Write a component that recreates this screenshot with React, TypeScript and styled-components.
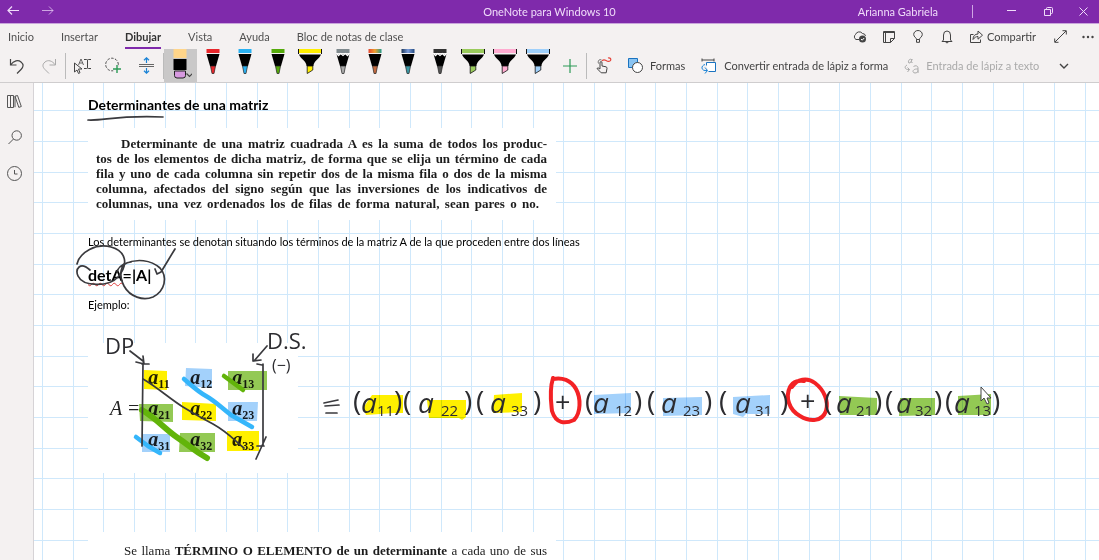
import React from "react";
import styled, { createGlobalStyle } from "styled-components";

const ui = `Lato, "Open Sans", sans-serif`;
const doc = `Lato, "Open Sans", sans-serif`;
const serif = `"Liberation Serif", serif`;

const GlobalStyle = createGlobalStyle`
  * { box-sizing: border-box; }
  body { margin: 0; background: #f4f1f1; }
`;

const Shell = styled.div`
  display: flex;
  flex-direction: column;
  height: 100vh;
  overflow: hidden;
  font-family: ${ui};
  font-size: 11px;
  color: #444;
`;

const TitleBar = styled.header`
  display: grid;
  grid-template-columns: 1fr auto 1fr;
  align-items: center;
  flex: none;
  height: 24px;
  background: #7f2aab;
  border-bottom: 1px solid #c9a5dc;
  color: #f0dcfa;
`;

const Side = styled.div<{ $end?: boolean }>`
  display: flex;
  align-items: center;
  justify-content: ${(p) => (p.$end ? "flex-end" : "flex-start")};
`;

const AppTitle = styled.h1`
  margin: 0;
  font-size: 11px;
  font-weight: 400;
`;

const IconButton = styled.button<{ $w: number }>`
  display: flex;
  align-items: center;
  justify-content: center;
  flex: none;
  width: ${(p) => p.$w}px;
  height: 100%;
  padding: 0;
  border: 0;
  background: none;
  color: inherit;
`;

const UserName = styled.span`
  margin-right: 34px;
`;

const TitleRule = styled.span`
  width: 1px;
  height: 13px;
  margin-right: 20px;
  background: #cfa5e4;
`;

const TabBar = styled.div`
  display: flex;
  justify-content: space-between;
  flex: none;
  height: 25px;
`;

const Tabs = styled.nav`
  display: flex;
  gap: 27px;
  padding-left: 8px;
`;

const Tab = styled.button<{ $active?: boolean }>`
  padding: 2px 0 0;
  border: 0;
  border-bottom: 2px solid ${(p) => (p.$active ? "#7f2aab" : "transparent")};
  background: none;
  color: ${(p) => (p.$active ? "#333" : "#505050")};
  font-family: inherit;
  font-size: 11px;
  font-weight: ${(p) => (p.$active ? 700 : 400)};
  line-height: 20px;
  white-space: nowrap;
`;

const TabTools = styled.div`
  display: flex;
  align-items: center;
`;

const TextButton = styled.button<{ $gap: number; $muted?: boolean }>`
  display: flex;
  align-items: center;
  flex: none;
  gap: ${(p) => p.$gap}px;
  height: 100%;
  padding: 0 8px;
  border: 0;
  background: none;
  color: ${(p) => (p.$muted ? "#aaa" : "#444")};
  font-family: inherit;
  font-size: 11px;
  white-space: nowrap;
`;

const ToolBar = styled.div`
  display: flex;
  align-items: center;
  flex: none;
  height: 34px;
  border-bottom: 1px solid #cfcdce;
`;

const Rule = styled.span`
  flex: none;
  width: 1px;
  height: 26px;
  background: #bbb;
`;

const Pens = styled.div`
  display: grid;
  grid-template-columns: repeat(12, 1fr);
  flex: none;
  width: 390px;
  height: 100%;
`;

const PenButton = styled.button<{ $selected?: boolean }>`
  display: flex;
  justify-content: center;
  padding: 0;
  border: 0;
  background: ${(p) => (p.$selected ? "#c9c8c8" : "none")};
`;

const Body = styled.div`
  display: flex;
  flex: 1;
  min-height: 0;
`;

const Rail = styled.aside`
  display: flex;
  flex-direction: column;
  align-items: flex-start;
  flex: none;
  width: 34px;
  border-right: 1px solid #d6d3d6;
`;

const RailButton = styled.button`
  display: flex;
  align-items: center;
  justify-content: center;
  width: 29px;
  height: 36px;
  padding: 0;
  border: 0;
  background: none;
  color: #555;
`;

const Page = styled.main`
  position: relative;
  flex: 1;
  min-width: 0;
  overflow: hidden;
  padding: 12px 0 0 54px;
  background-color: #fff;
  background-image:
    linear-gradient(90deg, transparent 8px, #cfe8fb 8px, #cfe8fb 9px, transparent 9px, transparent 39px, #cfe8fb 39px, #cfe8fb 40px, transparent 40px, transparent 69px, #cfe8fb 69px, #cfe8fb 70px, transparent 70px),
    linear-gradient(transparent 27px, #cfe8fb 27px, #cfe8fb 28px, transparent 28px, transparent 58px, #cfe8fb 58px, #cfe8fb 59px, transparent 59px, transparent 89px, #cfe8fb 89px, #cfe8fb 90px, transparent 90px);
  background-size: 92px 92px;
  color: #000;
  font-family: ${doc};
`;

const Heading = styled.h2`
  margin: 0 0 13px;
  font-size: 14px;
  line-height: 20px;
  font-weight: 700;
`;

const Clip = styled.section`
  width: 468px;
  padding: 8px 9px 9px 8px;
  background: #fff;
  color: #1c1c1c;
  font-family: ${serif};
  font-size: 13px;
  line-height: 15px;
`;

const ClipLine = styled.span<{ $indent?: boolean; $short?: boolean }>`
  display: block;
  padding-left: ${(p) => (p.$indent ? 25 : 0)}px;
  padding-right: ${(p) => (p.$short ? 8 : 0)}px;
  font-weight: 700;
  text-align: justify;
  text-align-last: justify;
  white-space: nowrap;
`;

const Note = styled.p<{ $top: number }>`
  margin: ${(p) => p.$top}px 0 0;
  font-size: 11px;
  line-height: 20px;
`;

const Formula = styled.p`
  margin: 13px 0 0;
  font-size: 16px;
  font-weight: 700;
  line-height: 20px;
`;

const Misspelt = styled.span`
  text-decoration: underline wavy #e04040 1px;
`;

const MatrixClip = styled.section`
  display: flex;
  align-items: center;
  gap: 8px;
  width: 210px;
  height: 130px;
  margin: 28px 0 59px;
  padding: 0 0 0 22px;
  background: #fff;
  color: #222;
  font-family: ${serif};
  font-size: 20px;
  font-style: italic;
`;

const MatrixTable = styled.table`
  border-collapse: collapse;
  td {
    width: 42px;
    height: 31px;
    padding: 0;
    line-height: 24px;
    font-weight: 700;
  }
  sub {
    font-size: 12px;
    font-style: normal;
    line-height: 0;
    vertical-align: -4px;
  }
`;

const LowerClip = styled(Clip)`
  padding: 11px 9px 9px 36px;
  height: 60px;
  white-space: nowrap;
  text-align-last: justify;
`;

const InkLayer = styled.svg<{ $blend?: boolean }>`
  position: absolute;
  left: 0;
  top: 0;
  width: 1065px;
  height: 477px;
  pointer-events: none;
  mix-blend-mode: ${(p) => (p.$blend ? "multiply" : "normal")};
  font-family: "Open Sans", sans-serif;
`;

const Svg = ({ w = 18, h = w, children }: { w?: number; h?: number; children: React.ReactNode }) => (
  <svg width={w} height={h} viewBox={`0 0 ${w} ${h}`} fill="none" stroke="currentColor" aria-hidden="true">
    {children}
  </svg>
);

type PenSpec = { name: string; kind: "pen" | "marker" | "pencil"; color: string; tip?: string };

const pens: PenSpec[] = [
  { name: "Lápiz rojo", kind: "pen", color: "#e8262b" },
  { name: "Lápiz azul", kind: "pen", color: "#29b1f2" },
  { name: "Lápiz verde", kind: "pen", color: "#55aa0b" },
  { name: "Marcador amarillo", kind: "marker", color: "#ffee00" },
  { name: "Lápiz gris", kind: "pencil", color: "#7f898d", tip: "#aaa" },
  { name: "Lápiz arcoíris", kind: "pen", color: "url(#rainbow)", tip: "#c2693f" },
  { name: "Lápiz galaxia", kind: "pen", color: "url(#galaxy)", tip: "#3a98a5" },
  { name: "Lápiz negro", kind: "pencil", color: "#333", tip: "#555" },
  { name: "Marcador verde", kind: "marker", color: "#9acb5c" },
  { name: "Marcador rosa", kind: "marker", color: "#ffabd0" },
  { name: "Marcador celeste", kind: "marker", color: "#9fd0fb" },
];

const Pen = ({ kind, color, tip }: PenSpec) => (
  <svg width="24" height="26" viewBox="0 0 24 26" aria-hidden="true">
    {kind === "marker" ? (
      <>
        <path d="M0.5 0h23v4h-23z" fill={color} />
        <path d="M0.5 0v5M23.5 0v5" stroke="#111" />
        <path d="M1 5.500h22C21.500 10 15.500 12 15.500 17h-7C8.500 12 2.500 10 1 5.500z" fill="#000" />
        <path d="M9.200 17h5.600v4l-5.600 3.500z" fill={tip ?? color} stroke="#111" strokeWidth=".8" />
      </>
    ) : (
      <>
        <path d="M5.500 0h13v4h-13z" fill={color} />
        <path d="M5.500 5h13L15 17H9z" fill="#000" />
        {kind === "pencil" && <path d="M5.500 4.500l2 2 2.200-2 2.300 2 2.300-2 2.200 2 2-2" fill="none" stroke="#fff" strokeWidth="1.300" />}
        <path d="M9.500 17h5l-1.500 7.500h-2z" fill={tip ?? color} stroke="#222" strokeWidth=".7" />
      </>
    )}
  </svg>
);

const YELLOW = "#fff000";
const BLUE = "#a3d1fb";
const GREEN = "#93c954";

const highlights: [string, string][] = [
  [YELLOW, "M144 370l23 1v19l-23-1z"],
  [BLUE, "M186 368l26 1v19l-27-2z"],
  [GREEN, "M228 371h39v19h-39z"],
  [GREEN, "M139 404h34v18l-33-1z"],
  [YELLOW, "M182 402l34 2v17l-34-1z"],
  [BLUE, "M228 402h30l-1 19h-29z"],
  [BLUE, "M142 434h28v18h-28z"],
  [GREEN, "M180 433h35v19h-36z"],
  [YELLOW, "M227 431h32v20h-32z"],
  [YELLOW, "M372 395h31v18h-9l-28 2-3-7z"],
  [YELLOW, "M427 400h39v17l-4 3-3-2h-30z"],
  [YELLOW, "M494 395l28-2v19l-29 1z"],
  [BLUE, "M594 395l37-2v20l-37 1z"],
  [BLUE, "M663 398l39-1v18l-39 1z"],
  [BLUE, "M733 397l37-2v19h-24l-3 3-10-3z"],
  [GREEN, "M839 396l38 2v17h-37z"],
  [GREEN, "M900 398h35v17l-36 1z"],
  [GREEN, "M958 396l33-2v21h-33z"],
];

/* open paren, letter, subscript and close paren of each written factor */
const factors: [number, number, string, number, number][] = [
  [353, 361, "11", 377, 394],
  [403, 418, "22", 441, 464],
  [476, 490, "33", 511, 533],
  [585, 593, "12", 615, 634],
  [647, 661, "23", 683, 704],
  [719, 735, "31", 755, 780],
  [824, 836, "21", 856, 874],
  [885, 896, "32", 915, 934],
  [945, 954, "13", 974, 992],
];

const matrix = [["11", "12", "13"], ["21", "22", "23"], ["31", "32", "33"]];

export default function App() {
  return (
    <Shell>
      <GlobalStyle />
      <svg width="0" height="0" style={{ position: "absolute" }} aria-hidden="true">
        <defs>
          <linearGradient id="rainbow"><stop stopColor="#e6452e" /><stop offset=".5" stopColor="#f0a030" /><stop offset="1" stopColor="#1e9a8a" /></linearGradient>
          <linearGradient id="galaxy"><stop stopColor="#1c3558" /><stop offset=".5" stopColor="#7e9edb" /><stop offset="1" stopColor="#234a80" /></linearGradient>
        </defs>
      </svg>

      <TitleBar>
        <Side>
          <IconButton $w={25} aria-label="Atrás"><Svg w={12}><path d="M12 4.500H1M5 .5L1 4.500l4 4" strokeWidth="1.200" /></Svg></IconButton>
          <IconButton $w={46} aria-label="Adelante"><Svg w={12}><path d="M0 4.500h11M7 .5l4 4-4 4" opacity=".7" /></Svg></IconButton>
        </Side>
        <AppTitle>OneNote para Windows 10</AppTitle>
        <Side $end>
          <UserName>Arianna Gabriela</UserName>
          <TitleRule />
          <IconButton $w={37} aria-label="Minimizar"><Svg w={9}><path d="M0 3.500h9" /></Svg></IconButton>
          <IconButton $w={37} aria-label="Restaurar"><Svg w={9}><path d="M.5 2.500h6v6h-6zM2.500 2.500V1.500q0-1 1-1h4q1 0 1 1v4q0 1-1 1h-1" /></Svg></IconButton>
          <IconButton $w={32} aria-label="Cerrar"><Svg w={9}><path d="M.5.5l8 8M8.500.5l-8 8" /></Svg></IconButton>
        </Side>
      </TitleBar>

      <TabBar>
        <Tabs aria-label="Cinta">
          {["Inicio", "Insertar", "Dibujar", "Vista", "Ayuda", "Bloc de notas de clase"].map((t) => (
            <Tab key={t} $active={t === "Dibujar"}>{t}</Tab>
          ))}
        </Tabs>
        <TabTools>
          <IconButton $w={29} aria-label="Sincronizar">
            <Svg w={16} h={14}>
              <path d="M7 9.500H4a3 3 0 0 1-.5-5A4 4 0 0 1 10.500 3.500 3 3 0 0 1 13.500 6" />
              <circle cx="10.500" cy="9" r="3.500" fill="#444" stroke="none" /><path d="M9 9l1.200 1.200 2-2.200" stroke="#fff" />
            </Svg>
          </IconButton>
          <IconButton $w={29} aria-label="Notas"><Svg w={12}><path d="M.5.5h11v7l-4 4h-7zM7.500 11.500v-4h4M2.500.5v11M.5 1.500h11" /></Svg></IconButton>
          <IconButton $w={29} aria-label="Sugerencias"><Svg w={10} h={13}><path d="M3.500 9.500C3.500 7.500.7 7 .7 4.500a4.300 4 0 0 1 8.600 0C9.300 7 6.500 7.500 6.500 9.500zM3.500 9.500v2.800h3V9.500" /></Svg></IconButton>
          <IconButton $w={30} aria-label="Notificaciones"><Svg w={12} h={14}><path d="M2.500 10V5a3.500 4 0 0 1 7 0v5l1.500 1.500H1zM4.500 12q1.500 2 3 0" /></Svg></IconButton>
          <TextButton $gap={4}>
            <Svg w={13} h={13}><path d="M3.500 4.500h-3v8h10v-3M3 9.500C3 6 5 4 8 4V1l4.500 4.200L8 9.200V6.500C6 6.500 4.500 7.500 3 9.500z" /></Svg>
            Compartir
          </TextButton>
          <IconButton $w={33} aria-label="Pantalla completa"><Svg w={13}><path d="M1 12L12 1M8.500.7h3.800v3.800M.7 8.500v3.800h3.800" /></Svg></IconButton>
          <IconButton $w={22} aria-label="Más"><Svg w={12} h={4}><g fill="currentColor" stroke="none"><circle cx="1.500" cy="2" r="1.200" /><circle cx="6" cy="2" r="1.200" /><circle cx="10.500" cy="2" r="1.200" /></g></Svg></IconButton>
        </TabTools>
      </TabBar>

      <ToolBar>
        <IconButton $w={33} aria-label="Deshacer"><Svg w={16}><path d="M1.500 1v6h6M1.500 7C5 2.500 9 1.500 12 4c3 2.500 2.500 5 0 7.500l-4 4" strokeWidth="1.200" /></Svg></IconButton>
        <IconButton $w={32} aria-label="Rehacer"><Svg w={16}><path d="M14.500 1v6h-6M14.500 7C11 2.500 7 1.500 4 4c-3 2.500-2.500 5 0 7.500l4 4" stroke="#aaa" /></Svg></IconButton>
        <Rule />
        <IconButton $w={31} aria-label="Seleccionar objetos o escribir texto">
          <Svg w={18} h={16}>
            <path d="M1.500 5v9l2.500-2 1.500 3.500 1.500-.8L5.500 11H9z" />
            <path d="M5.500 7l2.500-6 2.500 6M6.500 5h3" strokeWidth=".8" /><path d="M11 1.500h2.500q1 0 1 1v7q0 1-1 1H11M18 1.500h-2.500q-1 0-1 1v7q0 1 1 1H18" />
          </Svg>
        </IconButton>
        <IconButton $w={33} aria-label="Selección de lazo">
          <Svg w={17} h={17}><circle cx="7" cy="7.500" r="6.300" strokeDasharray="2.500 1.500" /><path d="M12 8v8M8 12h8" stroke="#f4f1f1" strokeWidth="3.500" /><path d="M12 8v8M8 12h8" stroke="#2b9a56" strokeWidth="1.400" /></Svg>
        </IconButton>
        <IconButton $w={33} aria-label="Insertar espacio">
          <Svg w={15} h={17}><path d="M0 7.500h15M0 9.500h15" stroke="#666" /><path d="M7.500 6V1M5 3.200L7.500.8 10 3.200M7.500 11v5M5 13.800l2.500 2.400 2.500-2.400" stroke="#1a83d6" strokeWidth="1.200" /></Svg>
        </IconButton>
        <Rule />
        <Pens>
          <PenButton $selected aria-label="Borrador">
            <svg width="24" height="32" viewBox="0 0 24 32" aria-hidden="true">
              <path d="M5.500 0h13v9h-13z" fill="#ffd58a" />
              <path d="M5.500 10h13v11h-13z" fill="#000" />
              <path d="M6.500 22h11v4.500q0 2.500-2.500 2.500H9q-2.500 0-2.500-2.500z" fill="#d79ae0" stroke="#222" />
              <path d="M18.500 24.500l3 3 3-3" fill="none" stroke="#444" strokeWidth="1.200" />
            </svg>
          </PenButton>
          {pens.map((p) => <PenButton key={p.name} aria-label={p.name}><Pen {...p} /></PenButton>)}
        </Pens>
        <IconButton $w={32} aria-label="Agregar lápiz"><Svg w={14}><path d="M7 0v14M0 7h14" stroke="#2b9a56" strokeWidth="1.200" /></Svg></IconButton>
        <Rule />
        <IconButton $w={33} aria-label="Dibujar con el dedo">
          <Svg w={16} h={17}>
            <path d="M4 11.500V5.200q1-1.200 2 0V9l4 .8q1 .3 1 1.500l-.8 4.500h-5L1 11.500q.8-1.500 3 .5z" />
            <path d="M2.500 6.500C1.500 3.500 3.500 2 5.500 3" strokeWidth=".8" />
            <path d="M6 4C8 1.500 9.500 3.500 11.500 4.200S15.500 3.500 14.500 1.500q-1-1-2.500-.5" stroke="#e5443b" strokeWidth="1.200" />
          </Svg>
        </IconButton>
        <TextButton $gap={7}>
          <Svg w={15} h={15}><path d="M.5.5h9v9h-9z" fill="#8ac4f2" stroke="#1a73c0" /><circle cx="9.500" cy="9.500" r="5" fill="#fff" stroke="#444" /></Svg>
          Formas
        </TextButton>
        <TextButton $gap={7}>
          <Svg w={16} h={16}>
            <path d="M1 2h12M1 .5v3M13 .5v3" /><path d="M5.500 7.500v-3h9v9h-7" fill="#fff" stroke="#1a73c0" /><path d="M4 6.500C-1 8 .500 13.500 6 12.500M4 9.500l2.500 3L4 15.500" stroke="#1a83d6" />
          </Svg>
          Convertir entrada de lápiz a forma
        </TextButton>
        <TextButton $gap={6} $muted disabled>
          <Svg w={16} h={16}>
            <path d="M7.500 1.500C5 0 3.500 4.500 5 5s2.500-2 3-4c-1 3-.8 4 .5 3.500M3 7C0 8.500.5 12 5.500 11.500M3.500 9.500l2 2-2 2.500" />
            <path d="M9.500 8.500c2-1.500 4.500-.5 4.500 1.200V15M14 11c-6-.5-6 4-3 4 1.800 0 3-1.200 3-2.500" />
          </Svg>
          Entrada de lápiz a texto
        </TextButton>
        <IconButton $w={34} aria-label="Más opciones"><Svg w={10} h={6}><path d="M1 1l4 4 4-4" strokeWidth="1.400" /></Svg></IconButton>
      </ToolBar>

      <Body>
        <Rail>
          <RailButton aria-label="Blocs de notas"><Svg w={15} h={13}><path d="M.5.5h3v12h-3zM3.500.5h3v12h-3zM8 1.200l2.500-.7 3.800 11-2.500.9zM8 1.200v11" /></Svg></RailButton>
          <RailButton aria-label="Buscar"><Svg w={14} h={15}><circle cx="8.700" cy="5.500" r="4.700" /><path d="M5.500 9L.5 14" /></Svg></RailButton>
          <RailButton aria-label="Recientes"><Svg w={15} h={15}><circle cx="7.500" cy="7.500" r="7" /><path d="M7.500 4v4h3" /></Svg></RailButton>
        </Rail>

        <Page>
          <Heading>Determinantes de una matriz</Heading>
          <Clip>
            <ClipLine $indent>Determinante de una matriz cuadrada A es la suma de todos los produc-</ClipLine>
            <ClipLine>tos de los elementos de dicha matriz, de forma que se elija un término de cada</ClipLine>
            <ClipLine>fila y uno de cada columna sin repetir dos de la misma fila o dos de la misma</ClipLine>
            <ClipLine>columna, afectados del signo según que las inversiones de los indicativos de</ClipLine>
            <ClipLine $short>columnas, una vez ordenados los de filas de forma natural, sean pares o no.</ClipLine>
          </Clip>
          <Note $top={12}>Los determinantes se denotan situando los términos de la matriz A de la que proceden entre dos líneas</Note>
          <Formula><Misspelt>detA</Misspelt>=|A|</Formula>
          <Note $top={10}>Ejemplo:</Note>
          <MatrixClip>
            <span>A =</span>
            <MatrixTable>
              <tbody>
                {matrix.map((row) => (
                  <tr key={row[0]}>{row.map((c) => <td key={c}>a<sub>{c}</sub></td>)}</tr>
                ))}
              </tbody>
            </MatrixTable>
          </MatrixClip>
          <LowerClip>Se llama <b>TÉRMINO O ELEMENTO de un determinante</b> a cada uno de sus</LowerClip>

          <InkLayer $blend viewBox="34 83 1065 477" aria-hidden="true">
            {highlights.map(([c, d]) => <path key={d} d={d} fill={c} />)}
          </InkLayer>

          <InkLayer viewBox="34 83 1065 477">
            <g fill="none" strokeLinecap="round" strokeLinejoin="round">
              <g stroke="#35b6fb" strokeWidth="4.500">
                <path d="M184 379C190 384 197 391 206 396S222 408 231 415L252 427" />
                <path d="M136 437L148 446 160 453" />
              </g>
              <g stroke="#62b40a" strokeWidth="4.500">
                <path d="M224 376L243 390" />
                <path d="M142 410C157 419 166 430 178 438S193 450 207 458" strokeWidth="6" />
              </g>
              <g stroke="#3a3a3e" strokeWidth="1.700">
                <path d="M88 120C104 121 116 115 163 117" />
                <path d="M90 270C80 261 75 269 78 276C83 287 109 287 118 277C129 264 126 251 111 247C96 243 80 252 77 264" />
                <path d="M131 262C119 263 119 276 124 286C130 297 143 301 153 297C165 291 168 277 160 268C151 260 137 258 124 264C120 266 118 269 117 271" />
                <path d="M155 269L157 274 161 272C166 264 170 257 175 249" />
                <path d="M130 351L143 361M136 362l8 2-1-8M143 363l-1 83M142 364h7" />
                <path d="M267 346L254 361M253 354v7l8-1M263 364v82M257 364l5 1M266 437L256 459M257 446h7" />
                <path d="M143 379C157 387 170 399 183 407S197 415 213 424S235 441 244 448" />
                <path d="M324 403l14-3M325 406l14-1M326 413h11" />
              </g>
              <g stroke="#f32225" strokeWidth="4">
                <path d="M553 378C549 391 551 402 552 411C556 424 565 424 574 420C581 413 581 398 576 389C571 380 562 377 553 379" />
                <path d="M792 387C797 379 807 377 815 383C824 390 829 401 826 411C822 422 810 422 800 416C789 410 785 397 790 387C793 381 800 380 804 381" />
              </g>
            </g>
            <g fill="#2c2c30" fontSize="28" fontWeight="500">
              <g fontSize="22"><text x="105" y="354">DP</text><text x="267" y="349">D.S.</text></g>
              <text x="272" y="371" fontSize="16">(−)</text>
              {factors.map(([open, a, sub, subX, close]) => (
                <g key={sub}>
                  <text x={open} y="411">(</text>
                  <text x={a} y="413" fontStyle="italic">a</text>
                  <text x={subX} y="416" fontSize="15">{sub}</text>
                  <text x={close} y="411">)</text>
                </g>
              ))}
              <text x="555" y="412" fontSize="27">+</text>
              <text x="800" y="411" fontSize="27">+</text>
            </g>
            <path d="M981 387v14l3-3 3 6 2-1-2-5h4z" fill="#fff" stroke="#444" />
          </InkLayer>
        </Page>
      </Body>
    </Shell>
  );
}
